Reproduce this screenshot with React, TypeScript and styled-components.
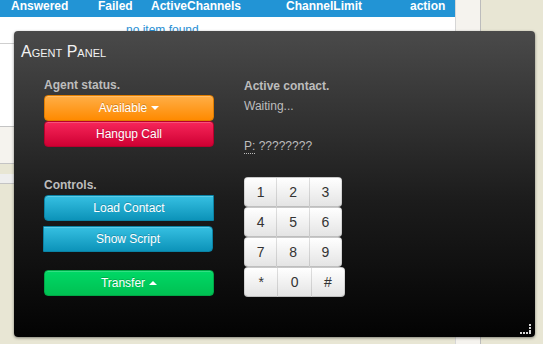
import * as React from 'react'
import styled, { createGlobalStyle } from 'styled-components'

const GlobalStyle = createGlobalStyle`
  html, body {
    margin: 0;
    padding: 0;
  }
  body {
    background: #e8e6d4;
    font-family: 'Liberation Sans', Arial, sans-serif;
    overflow: hidden;
  }
`

const tones = {
  orange: { top: '#ffae47', bottom: '#ff8a00', border: '#e07d00' },
  red: { top: '#f7265a', bottom: '#cf0033', border: '#b8002c' },
  blue: { top: '#36c0e2', bottom: '#0c93b9', border: '#0a83a5' },
  green: { top: '#00d866', bottom: '#00c152', border: '#00a846' },
}

type Tone = keyof typeof tones

const columns = ['Answered', 'Failed', 'ActiveChannels', 'ChannelLimit', 'action']
const keys = [
  ['1', '2', '3'],
  ['4', '5', '6'],
  ['7', '8', '9'],
  ['*', '0', '#'],
]

export default function App() {
  return (
    <>
      <GlobalStyle />
      <Viewport>
        <Page>
          <Main>
            <HeaderRow>
              {columns.map(c => (
                <span key={c}>{c}</span>
              ))}
            </HeaderRow>
            <EmptyRow>no item found</EmptyRow>
            <Band $bg="#fff" $h={82} $line />
            <Band $bg="#f5f3ee" $h={36} $line />
            <Band $bg="#e8e6d4" $h={10} />
            <Band $bg="#eeeeee" $h={9} $line />
            <Band $bg="#e8e6d4" $h={0} $grow />
          </Main>
          <Sidebar />
          <Rest />
        </Page>

        <Panel>
          <Title>Agent Panel</Title>
          <Body>
            <Column>
              <Label>Agent status.</Label>
              <Btn $tone="orange">
                Available <Caret />
              </Btn>
              <Btn $tone="red">Hangup Call</Btn>

              <Label $gap={29}>Controls.</Label>
              <Btn $tone="blue" $radius="4px 0 0 4px">
                Load Contact
              </Btn>
              <Btn $tone="blue" $gap={5} $shift={-1} $radius="0 4px 4px 0">
                Show Script
              </Btn>
              <Btn $tone="green" $gap={18}>
                Transfer <Caret $up />
              </Btn>
            </Column>

            <Column>
              <Label $lh={20}>Active contact.</Label>
              <Info>Waiting...</Info>
              <Info>&nbsp;</Info>
              <Info>
                <Abbr title="Phone">P:</Abbr> ????????
              </Info>
              <Keypad>
                {keys.map((row, i) => (
                  <KeyRow key={i}>
                    {row.map(k => (
                      <Key key={k} $w={i === 3 ? 34.4 : 33.4}>
                        {k}
                      </Key>
                    ))}
                  </KeyRow>
                ))}
              </Keypad>
            </Column>
          </Body>
          <Grip width="12" height="10" viewBox="0 0 12 10">
            {[0, 3, 6, 9].map(x => (
              <rect key={'h' + x} x={x} y={8} width="2" height="2" fill="#d8d8d8" />
            ))}
            {[0, 3, 6].map(y => (
              <rect key={'v' + y} x={9} y={y} width="2" height="2" fill="#d8d8d8" />
            ))}
          </Grip>
        </Panel>
      </Viewport>
    </>
  )
}

const Viewport = styled.div`
  position: relative;
  width: 543px;
  height: 344px;
  overflow: hidden;
`

const Page = styled.div`
  display: flex;
  margin-top: -4px;
  height: 348px;
`

const Main = styled.div`
  width: 455px;
  display: flex;
  flex-direction: column;
`

const HeaderRow = styled.div`
  display: grid;
  grid-template-columns: 87px 53px 135px 124px 1fr;
  padding-left: 11px;
  height: 21px;
  line-height: 21px;
  background: #2294d5;
  color: #fff;
  font-size: 12px;
  font-weight: bold;
`

const EmptyRow = styled.div`
  height: 27px;
  box-sizing: border-box;
  padding: 6px 0 0 126px;
  line-height: 14px;
  font-size: 12px;
  color: #2a8fd4;
  background: #fff;
  border-bottom: 1px solid #cfcfcf;
`

const Band = styled.div<{ $bg: string; $h: number; $line?: boolean; $grow?: boolean }>`
  background: ${({ $bg }) => $bg};
  height: ${({ $h }) => $h}px;
  flex: ${({ $grow }) => ($grow ? 1 : 'none')};
  border-bottom: ${({ $line }) => ($line ? '1px solid #c4c4c4' : 'none')};
`

const Sidebar = styled.div`
  width: 24px;
  background: #f5f3ee;
  border-left: 1px solid #d6d6d6;
  border-right: 1px solid #bcbcbc;
`

const Rest = styled.div`
  flex: 1;
  background: #e8e6d4;
`

const Panel = styled.section`
  position: absolute;
  left: 14px;
  top: 31px;
  width: 521px;
  height: 306px;
  box-sizing: border-box;
  padding: 11px 0 0 7px;
  border-radius: 4px;
  background: linear-gradient(#4a4a4a, #1c1c1c 55%, #030303);
  box-shadow: 0 1px 3px rgba(0, 0, 0, 0.45);
  color: #bbb;
`

const Title = styled.h3`
  margin: 0;
  font-size: 16px;
  font-weight: normal;
  font-variant: small-caps;
  line-height: 20px;
  color: #f2f2f2;
`

const Body = styled.div`
  display: grid;
  grid-template-columns: 170px 1fr;
  column-gap: 30px;
  margin-top: 14px;
  padding-left: 23px;
`

const Column = styled.div`
  display: flex;
  flex-direction: column;
  align-items: flex-start;
`

const Label = styled.div<{ $gap?: number; $lh?: number }>`
  margin-top: ${({ $gap }) => $gap ?? 0}px;
  font-size: 12px;
  font-weight: bold;
  line-height: ${({ $lh }) => $lh ?? 19}px;
  color: #bdbdbd;
`

const Btn = styled.button<{ $tone: Tone; $gap?: number; $shift?: number; $radius?: string }>`
  width: 170px;
  height: 26px;
  box-sizing: border-box;
  margin: ${({ $gap }) => $gap ?? 0}px 0 0 ${({ $shift }) => $shift ?? 0}px;
  padding: 0;
  display: flex;
  align-items: center;
  justify-content: center;
  gap: 4px;
  font-family: inherit;
  font-size: 12px;
  color: #fff;
  text-shadow: 0 -1px 0 rgba(0, 0, 0, 0.2);
  border: 1px solid ${({ $tone }) => tones[$tone].border};
  border-radius: ${({ $radius }) => $radius ?? '4px'};
  background: linear-gradient(
    ${({ $tone }) => tones[$tone].top},
    ${({ $tone }) => tones[$tone].bottom}
  );
  box-shadow: inset 0 1px 0 rgba(255, 255, 255, 0.2);
  cursor: pointer;
`

const Caret = styled.span<{ $up?: boolean }>`
  display: inline-block;
  width: 0;
  height: 0;
  border-left: 4px solid transparent;
  border-right: 4px solid transparent;
  ${({ $up }) => ($up ? 'border-bottom: 4px solid #fff;' : 'border-top: 4px solid #fff;')}
`

const Info = styled.div`
  font-size: 12px;
  line-height: 20px;
  color: #bdbdbd;
`

const Abbr = styled.abbr`
  text-decoration: none;
  border-bottom: 1px dotted #bdbdbd;
  cursor: help;
`

const Keypad = styled.div`
  margin-top: 21px;
  display: flex;
  flex-direction: column;
`

const KeyRow = styled.div`
  display: flex;
`

const Key = styled.button<{ $w: number }>`
  width: ${({ $w }) => $w}px;
  height: 30px;
  box-sizing: border-box;
  padding: 0;
  font-family: inherit;
  font-size: 14px;
  color: #333;
  background: linear-gradient(#ffffff, #e4e4e4);
  border: 1px solid rgba(0, 0, 0, 0.12);
  border-bottom-color: rgba(0, 0, 0, 0.25);
  border-radius: 0;
  cursor: pointer;
  & + & {
    margin-left: -1px;
  }
  &:first-child {
    border-radius: 4px 0 0 4px;
  }
  &:last-child {
    border-radius: 0 4px 4px 0;
  }
`

const Grip = styled.svg`
  position: absolute;
  right: 3px;
  bottom: 3px;
`
